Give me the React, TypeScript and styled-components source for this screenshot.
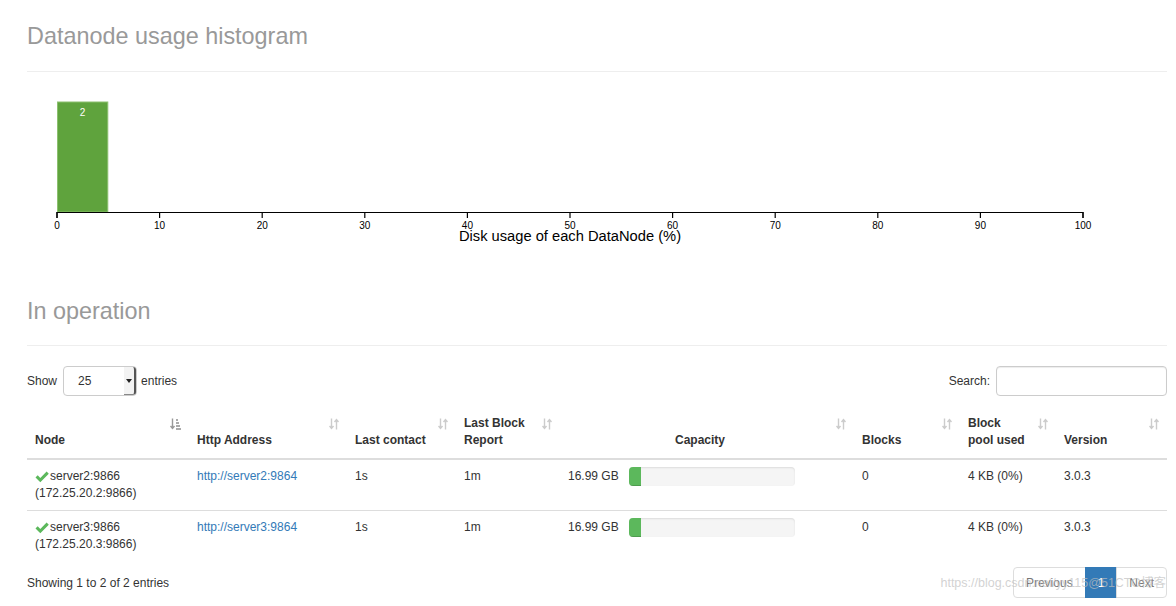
import styled, { createGlobalStyle } from 'styled-components'

const GlobalStyle = createGlobalStyle`
  html, body {
    margin: 0;
    padding: 0;
    background: #fff;
  }
  body {
    font-family: "Liberation Sans", Arial, sans-serif;
    font-size: 12px;
    color: #333;
  }
`

const Page = styled.div`
  position: relative;
  padding: 0 9px 0 27px;
  width: 1140px;
`

const PageHeader = styled.div`
  margin-top: ${(p: { top: number }) => p.top}px;
  padding-bottom: 21px;
  border-bottom: 1px solid #eee;
`

const HeaderTitle = styled.h1`
  margin: 0;
  font-size: 23.4px;
  line-height: 1.1;
  font-weight: 400;
  color: #999;
`

const Chart = styled.svg`
  display: block;
  width: 1140px;
  height: 200px;
  font-family: "Liberation Sans", Arial, sans-serif;
`

const Controls = styled.div`
  margin-top: 20px;
  display: flex;
  justify-content: space-between;
  align-items: center;
  height: 30px;
`

const ControlGroup = styled.label`
  display: flex;
  align-items: center;
  gap: 4px;
  font-size: 12px;
  color: #333;
`

const SelectBox = styled.div`
  box-sizing: border-box;
  width: 74px;
  height: 30px;
  margin-left: 2px;
  border: 1px solid #ccc;
  border-radius: 4px;
  display: flex;
  align-items: center;
  justify-content: space-between;
  padding-left: 14px;
  font-size: 12px;
`

const SelectArrow = styled.span`
  box-sizing: border-box;
  width: 12px;
  height: 28px;
  background: #f3f3f3;
  border-right: 2px solid #555;
  border-bottom: 1px solid #888;
  border-radius: 0 3px 3px 0;
  display: flex;
  align-items: center;
  justify-content: center;
  &::after {
    content: '';
    border-left: 3px solid transparent;
    border-right: 3px solid transparent;
    border-top: 4px solid #222;
  }
`

const SearchInput = styled.div`
  box-sizing: border-box;
  width: 171px;
  height: 30px;
  margin-left: 2px;
  border: 1px solid #ccc;
  border-radius: 4px;
  box-shadow: inset 0 1px 1px rgba(0, 0, 0, 0.075);
`

const Table = styled.table`
  margin-top: 11px;
  width: 1140px;
  border-collapse: collapse;
  table-layout: fixed;
`

const Th = styled.th<{ w: number; center?: boolean }>`
  width: ${(p) => p.w}px;
  box-sizing: border-box;
  padding: 8px 8px 9px;
  vertical-align: bottom;
  border-bottom: 2px solid #ddd;
  font-weight: 700;
  font-size: 12px;
  line-height: 17px;
  color: #333;
  text-align: ${(p) => (p.center ? 'center' : 'left')};
`

const ThInner = styled.div`
  display: flex;
  min-height: 34px;
  gap: 4px;
`

const ThLabel = styled.span`
  flex: 1;
  align-self: flex-end;
`

const SortIcon = styled.span`
  align-self: flex-start;
  display: flex;
  padding-top: 3px;
`

const Td = styled.td`
  padding: 8px;
  vertical-align: top;
  font-size: 12px;
  line-height: 17px;
  border-top: 1px solid #ddd;
  color: #333;
`

const NodeName = styled.div`
  display: flex;
  align-items: center;
  gap: 1px;
`

const Link = styled.a`
  color: #337ab7;
  text-decoration: none;
`

const CapacityCell = styled.div`
  display: flex;
  align-items: center;
  height: 17px;
`

const CapacityText = styled.span`
  width: 50px;
  flex: none;
  white-space: nowrap;
`

const Progress = styled.div`
  margin-left: 11px;
  width: 166px;
  height: 19px;
  background: #f5f5f5;
  border-radius: 4px;
  box-shadow: inset 0 1px 2px rgba(0, 0, 0, 0.1);
  overflow: hidden;
  display: flex;
`

const ProgressFill = styled.div`
  height: 100%;
  background: #5cb85c;
  box-shadow: inset 0 -1px 0 rgba(0, 0, 0, 0.15);
`

const Footer = styled.div`
  margin-top: 6px;
  display: flex;
  justify-content: space-between;
  align-items: center;
  height: 31px;
  padding-bottom: 8px;
`

const Info = styled.div`
  font-size: 12px;
  color: #333;
`

const Pagination = styled.ul`
  display: flex;
  margin: 0;
  padding: 0;
  list-style: none;
`

const PageItem = styled.li<{ active?: boolean; first?: boolean; last?: boolean }>`
  box-sizing: border-box;
  height: 31px;
  padding: 0 12px;
  display: flex;
  align-items: center;
  font-size: 12px;
  border: 1px solid ${(p) => (p.active ? '#337ab7' : '#ddd')};
  margin-left: ${(p) => (p.first ? '0' : '-1px')};
  background: ${(p) => (p.active ? '#337ab7' : '#fff')};
  color: ${(p) => (p.active ? '#fff' : '#777')};
  border-radius: ${(p) => (p.first ? '4px 0 0 4px' : p.last ? '0 4px 4px 0' : '0')};
`

const Watermark = styled.div`
  position: absolute;
  right: 10px;
  bottom: 15px;
  font-size: 12.5px;
  color: rgba(190, 190, 190, 0.7);
  font-family: "Liberation Sans", "Noto Sans CJK SC", sans-serif;
  pointer-events: none;
  white-space: nowrap;
`

const SortBoth = () => (
  <svg width="10" height="12" viewBox="0 0 10 12">
    <path d="M2.5 0.5v10M0.5 8l2 2.5 2-2.5M7.5 11.5v-10M5.5 4l2-2.5 2 2.5" stroke="#ccc" strokeWidth="1.4" fill="none" />
  </svg>
)

const SortAsc = () => (
  <svg width="11" height="12" viewBox="0 0 11 12">
    <path d="M2.5 0.5v10M0.5 8l2 2.5 2-2.5" stroke="#999" strokeWidth="1.4" fill="none" />
    <path d="M6 1h2v2H6zM6 4h3v2H6zM6 7h4v2H6zM6 10h5v2H6z" fill="#aaa" />
  </svg>
)

const Check = () => (
  <svg width="14" height="12" viewBox="0 0 14 12">
    <path d="M0.5 6.5l2.2-2.2 2.6 2.6 6.3-6.4 2.2 2.2-8.5 8.6z" fill="#5cb85c" />
  </svg>
)

const ticks = [0, 10, 20, 30, 40, 50, 60, 70, 80, 90, 100]
const axisLeft = 30
const axisRight = 1056
const tx = (v: number) => axisLeft + ((axisRight - axisLeft) * v) / 100

const Histogram = () => (
  <Chart viewBox="0 0 1140 200">
    <rect x={tx(0) + 0.5} y={30} width={tx(5) - tx(0) - 1} height={110} fill="#5fa33d" stroke="#8cc06f" strokeWidth="1" />
    <text x={(tx(0) + tx(5)) / 2} y={44} fontSize="10" fill="#fff" textAnchor="middle">
      2
    </text>
    <path d={`M${axisLeft} 146V140.5H${axisRight}V146`} stroke="#000" strokeWidth="1.2" fill="none" />
    {ticks.map((t) => (
      <g key={t}>
        <line x1={tx(t)} x2={tx(t)} y1={140} y2={146} stroke="#000" strokeWidth="1.2" />
        <text x={tx(t)} y={157} fontSize="10" fill="#000" textAnchor="middle">
          {t}
        </text>
      </g>
    ))}
    <text x={(axisLeft + axisRight) / 2} y={169} fontSize="14.7" fill="#000" textAnchor="middle">
      Disk usage of each DataNode (%)
    </text>
  </Chart>
)

interface Column {
  label: string[]
  w: number
  center?: boolean
  asc?: boolean
}

const columns: Column[] = [
  { label: ['Node'], w: 162, asc: true },
  { label: ['Http Address'], w: 158 },
  { label: ['Last contact'], w: 109 },
  { label: ['Last Block', 'Report'], w: 104 },
  { label: ['Capacity'], w: 294, center: true },
  { label: ['Blocks'], w: 106 },
  { label: ['Block', 'pool used'], w: 96 },
  { label: ['Version'], w: 111 },
]

const nodes = [
  { name: 'server2:9866', ip: '172.25.20.2:9866', http: 'http://server2:9864' },
  { name: 'server3:9866', ip: '172.25.20.3:9866', http: 'http://server3:9864' },
]

const App = () => (
  <>
    <GlobalStyle />
    <Page>
      <PageHeader top={24}>
        <HeaderTitle>Datanode usage histogram</HeaderTitle>
      </PageHeader>
      <Histogram />
      <PageHeader top={27}>
        <HeaderTitle>In operation</HeaderTitle>
      </PageHeader>
      <Controls>
        <ControlGroup>
          Show
          <SelectBox>
            25
            <SelectArrow />
          </SelectBox>
          entries
        </ControlGroup>
        <ControlGroup>
          Search:
          <SearchInput />
        </ControlGroup>
      </Controls>
      <Table>
        <thead>
          <tr>
            {columns.map((c) => (
              <Th key={c.label.join(' ')} w={c.w} center={c.center}>
                <ThInner>
                  <ThLabel>
                    {c.label.map((l, i) => (
                      <div key={i}>{l}</div>
                    ))}
                  </ThLabel>
                  <SortIcon>{c.asc ? <SortAsc /> : <SortBoth />}</SortIcon>
                </ThInner>
              </Th>
            ))}
          </tr>
        </thead>
        <tbody>
          {nodes.map((n) => (
            <tr key={n.name}>
              <Td>
                <NodeName>
                  <Check />
                  {n.name}
                </NodeName>
                <div>({n.ip})</div>
              </Td>
              <Td>
                <Link href="#">{n.http}</Link>
              </Td>
              <Td>1s</Td>
              <Td>1m</Td>
              <Td>
                <CapacityCell>
                  <CapacityText>16.99 GB</CapacityText>
                  <Progress>
                    <ProgressFill style={{ width: '7%' }} />
                  </Progress>
                </CapacityCell>
                <div>&nbsp;</div>
              </Td>
              <Td>0</Td>
              <Td>4 KB (0%)</Td>
              <Td>3.0.3</Td>
            </tr>
          ))}
        </tbody>
      </Table>
      <Footer>
        <Info>Showing 1 to 2 of 2 entries</Info>
        <Pagination>
          <PageItem first>Previous</PageItem>
          <PageItem active>1</PageItem>
          <PageItem last>Next</PageItem>
        </Pagination>
      </Footer>
      <Watermark>https://blog.csdn.net/yy115@51CTO博客</Watermark>
    </Page>
  </>
)

export default App
